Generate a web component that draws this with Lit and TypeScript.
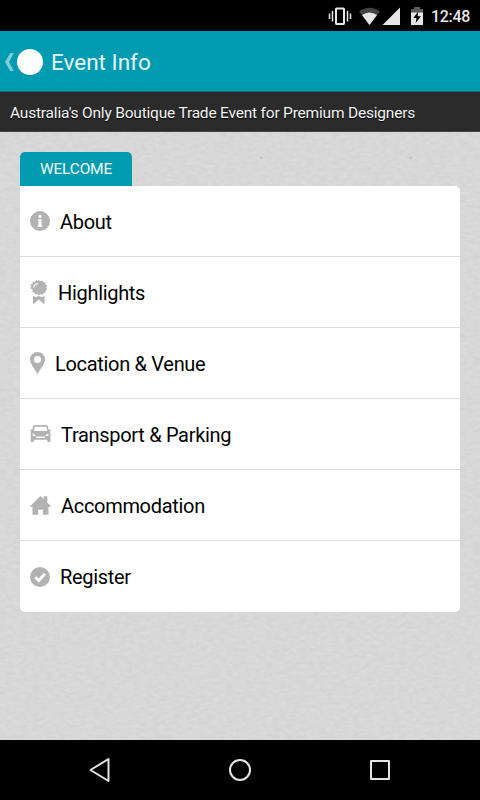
import { LitElement, html, css, svg } from "lit";
import { customElement } from "lit/decorators.js";

const icons = {
  info: svg`<circle cx="10" cy="10" r="10"/><path fill="#fff" d="M8.500 4.300h3v2.400h-3zM8 8.200h3.500v6.500h.8V16H7.700v-1.300h.8V9.500H8z"/>`,
  ribbon: svg`<path d="M8.800 0l1.500 1.300 2-.9 1 1.800 2.100.1-.1 2.200 1.900 1-1 1.900 1.100 1.800-1.700 1.300.1 2.100-2.100.3-.9 1.900-2.100-.6-1.800 1.200-1.500-1.500-2.100.5-.8-2-2.100-.5.3-2.100L.2 8.300l1.200-1.700L.6 4.600l2-.9.1-2.100 2.200.1L6.200.1l1.500 1z"/><path d="M3 16l3 1.100 2.700-1.200 2.800 1.200 3-1.100v8.600L11.600 22l-2.800-2.500L6 22l-3 2.600z"/><path d="M3.600 7.500Q4.200 4.200 7.700 3.300" fill="none" stroke="#fff" stroke-width="1.300"/>`,
  pin: svg`<path fill-rule="evenodd" d="M7.500 0C3.300 0 0 3.300 0 7.300c0 4.500 4.800 9.500 7.500 15.200C10.200 16.800 15 11.800 15 7.300 15 3.300 11.700 0 7.500 0zm0 4a3.500 3.500 0 1 1 0 7 3.500 3.500 0 0 1 0-7z"/>`,
  car: svg`<path fill-rule="evenodd" d="M4.700 0h11.800q1.100 0 1.400 1.100l1 4.100 1.100-.7q1-.2 1 .8 0 .9-1 1.100l-.5.100q1 .9 1 2.200v8.200h-3.100v-2.200H3.800v2.200H.7V8.700q0-1.300 1-2.200l-.6-.1q-1-.2-1-1.100 0-1 1-.8l1.100.7 1-4.100Q3.600 0 4.700 0zm.2 1.700L3.900 6h13.400l-1-4.300zM2.400 8.500l.5 2.200 3.100.5q-.3-2-3.600-2.700zm16.400 0q-3.300.7-3.600 2.700l3.100-.5zM6.300 12.900h8.600v-1.300H6.300z"/>`,
  home: svg`<path d="M10.500 0l3.200 3V.2h3.600v6.200l3.700 3.800v.6h-2.500v8h-5.700v-5H8.200v5H2.500v-8H0v-.6z"/>`,
  check: svg`<circle cx="10" cy="10" r="10"/><path d="M5.300 10.200l3.500 3.300 6.100-6.700" fill="none" stroke="#fff" stroke-width="2.800"/>`,
};

const rows = [
  { label: "About", icon: icons.info, w: 20, h: 20 },
  { label: "Highlights", icon: icons.ribbon, w: 18, h: 25 },
  { label: "Location & Venue", icon: icons.pin, w: 15, h: 23 },
  { label: "Transport & Parking", icon: icons.car, w: 21, h: 18 },
  { label: "Accommodation", icon: icons.home, w: 21, h: 19 },
  { label: "Register", icon: icons.check, w: 20, h: 20 },
];

@customElement("app-root")
export class AppRoot extends LitElement {
  static styles = css`
    :host { display: flex; flex-direction: column; width: 480px; height: 800px; overflow: hidden; background: #000; font-family: Roboto, sans-serif; }
    * { box-sizing: border-box; }
    svg { display: block; flex: none; }
    .status { height: 31px; display: flex; align-items: center; color: #e6e6e6; padding: 1px 10px 0 328px; font-size: 16px; font-weight: 500; white-space: nowrap; }
    .clock { margin-left: 7px; letter-spacing: -0.3px; }
    .header { height: 61px; background: #009bb0; display: flex; align-items: center; padding: 1px 0 0 4px; border-bottom: 1px solid #176b76; }
    .avatar { width: 26px; height: 26px; border-radius: 50%; background: #fff; margin-left: 3px; }
    .title { color: #e8f6f8; font-size: 22.500px; margin-left: 8px; }
    .tagline { height: 40px; background: #2b2b2b; border-bottom: 1px solid #424242; color: #f4f4f4; text-shadow: 0 1px 1px #000; font-size: 15.500px; letter-spacing: -0.200px; line-height: 42px; padding-left: 10px; white-space: nowrap; }
    .main { height: 608px; position: relative; padding: 20px 20px 0; background: #d6d6d6; }
    .paper { position: absolute; inset: 0; }
    .tab { position: relative; width: 112px; height: 33.500px; background: #009bb0; border-radius: 5px 5px 0 0; color: #f2fbfc; font-size: 15.500px; letter-spacing: -0.200px; line-height: 35px; text-align: center; }
    .card { position: relative; background: #fff; border-radius: 0 5px 5px 5px; height: 426.500px; display: grid; grid-template-rows: repeat(6, 1fr); overflow: hidden; }
    .row { display: flex; align-items: center; padding: 1px 0 0 10px; gap: 10px; border-bottom: 1px solid #dedede; font-size: 20px; letter-spacing: -0.310px; color: #000; }
    .row:last-child { border-bottom: 0; }
    .label { padding-top: 1px; }
    .icon { fill: #b2b2b2; }
    .nav { height: 60px; padding: 0 30px; display: grid; grid-template-columns: repeat(3, 1fr); }
    .nav svg { width: 100%; height: 60px; fill: none; stroke: #e4e4e4; stroke-width: 2; stroke-linejoin: round; }
  `;

  render() {
    return html`
      <div class="status">
        <svg width="96" height="30" viewBox="328 0 96 30">
          <g fill="none" stroke="#e6e6e6">
            <rect x="336" y="7.500" width="8" height="15.500" stroke-width="2" rx=".6"/>
            <path d="M332.500 10v10.500M329.500 12.500v5.500M347.500 10v10.500M350.500 12.500v5.500" stroke-width="1.500"/>
          </g>
          <path fill="#454545" d="M359 10.500Q369.500 3 380 10.500L369.500 24z"/>
          <path fill="#e6e6e6" d="M362 14Q369.500 9 377 14L369.500 24zM400 6.500V24h-17.500z"/>
          <path fill="#5b5b5b" d="M414 6h6v2h3v5h-12V8h3z"/>
          <path fill="#e6e6e6" d="M411 11.500h12V24h-12z"/>
          <path fill="#000" d="M418.300 10.500l-5 6.500h3.200l-.8 5 5.200-6.800h-3.300z"/>
        </svg>
        <span class="clock">12:48</span>
      </div>
      <div class="header">
        <svg width="10" height="20" viewBox="0 0 10 20"><path d="M6.300 1h3.500L5 10l4.800 9H6.300L1 10z" fill="#80ccd7"/></svg>
        <div class="avatar"></div>
        <div class="title">Event Info</div>
      </div>
      <div class="tagline">Australia's Only Boutique Trade Event for Premium Designers</div>
      <div class="main">
        <svg class="paper" width="480" height="608">
          <filter id="grain" x="0" y="0" width="100%" height="100%" color-interpolation-filters="sRGB">
            <feTurbulence type="fractalNoise" baseFrequency="0.15 0.3" numOctaves="3" seed="4"/>
            <feColorMatrix values="0.05 0 0 0 0.818  0.05 0 0 0 0.818  0.05 0 0 0 0.818  0 0 0 0 1"/>
          </filter>
          <rect width="480" height="608" filter="url(#grain)"/>
          <g fill="#aaa"><circle cx="111" cy="26" r=".8"/><circle cx="261" cy="26" r=".8"/><circle cx="411" cy="26" r=".8"/></g>
        </svg>
        <div class="tab">WELCOME</div>
        <div class="card">
          ${rows.map((r) => html`<div class="row">
            <svg class="icon" width=${r.w} height=${r.h} viewBox="0 0 ${r.w} ${r.h}">${r.icon}</svg>
            <span class="label">${r.label}</span>
          </div>`)}
        </div>
      </div>
      <div class="nav">
        <svg viewBox="0 0 140 60"><path d="M60.500 30l18-11v22z"/></svg>
        <svg viewBox="0 0 140 60"><circle cx="70" cy="30" r="10"/></svg>
        <svg viewBox="0 0 140 60"><path d="M61 21h18v18H61z"/></svg>
      </div>
    `;
  }
}
